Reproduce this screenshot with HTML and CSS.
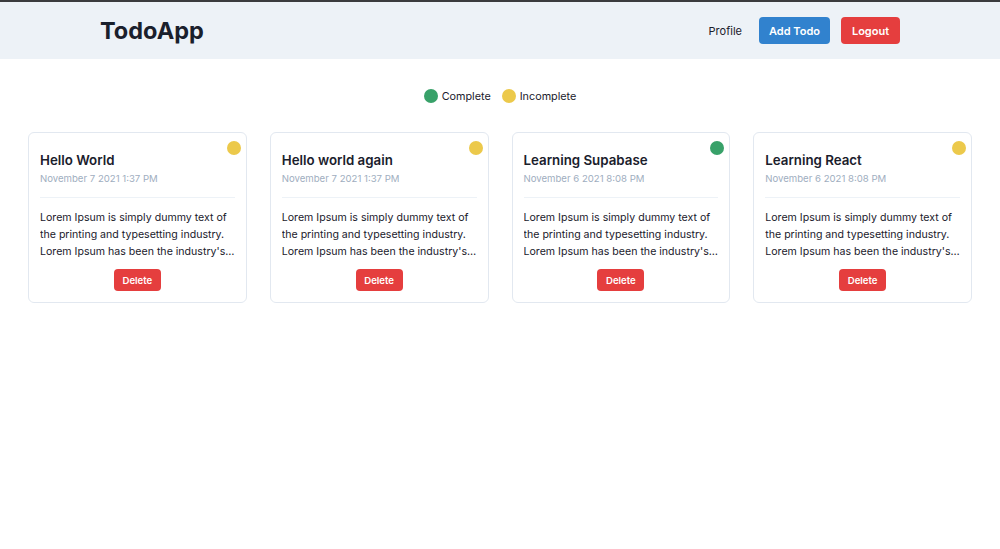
FILE: index.html
```html
<!DOCTYPE html>
<html>
<head>
<meta charset="utf-8">
<link rel="stylesheet" href="styles.css">
</head>
<body>
<header class="topbar">
  <div class="topbar-inner">
    <div class="logo">TodoApp</div>
    <nav class="nav">
      <span class="nav-link">Profile</span>
      <button class="btn btn-blue">Add Todo</button>
      <button class="btn btn-red">Logout</button>
    </nav>
  </div>
</header>
<main class="main">
  <div class="legend">
    <span class="legend-item"><span class="dot dot-green"></span>Complete</span>
    <span class="legend-item"><span class="dot dot-yellow"></span>Incomplete</span>
  </div>
  <div class="grid">
    <div class="card">
      <span class="dot dot-yellow status"></span>
      <h2 class="card-title">Hello World</h2>
      <div class="card-date">November 7 2021 1:37 PM</div>
      <hr class="divider">
      <p class="card-text">Lorem Ipsum is simply dummy text of the printing and typesetting industry. Lorem Ipsum has been the industry's standard dummy text ever since the 1500s.</p>
      <div class="card-actions"><button class="btn-sm">Delete</button></div>
    </div>
    <div class="card">
      <span class="dot dot-yellow status"></span>
      <h2 class="card-title">Hello world again</h2>
      <div class="card-date">November 7 2021 1:37 PM</div>
      <hr class="divider">
      <p class="card-text">Lorem Ipsum is simply dummy text of the printing and typesetting industry. Lorem Ipsum has been the industry's standard dummy text ever since the 1500s.</p>
      <div class="card-actions"><button class="btn-sm">Delete</button></div>
    </div>
    <div class="card">
      <span class="dot dot-green status"></span>
      <h2 class="card-title">Learning Supabase</h2>
      <div class="card-date">November 6 2021 8:08 PM</div>
      <hr class="divider">
      <p class="card-text">Lorem Ipsum is simply dummy text of the printing and typesetting industry. Lorem Ipsum has been the industry's standard dummy text ever since the 1500s.</p>
      <div class="card-actions"><button class="btn-sm">Delete</button></div>
    </div>
    <div class="card">
      <span class="dot dot-yellow status"></span>
      <h2 class="card-title">Learning React</h2>
      <div class="card-date">November 6 2021 8:08 PM</div>
      <hr class="divider">
      <p class="card-text">Lorem Ipsum is simply dummy text of the printing and typesetting industry. Lorem Ipsum has been the industry's standard dummy text ever since the 1500s.</p>
      <div class="card-actions"><button class="btn-sm">Delete</button></div>
    </div>
  </div>
</main>
</body>
</html>
```
FILE: styles.css
```css
* { box-sizing: border-box; }
html, body { margin: 0; padding: 0; background: #fff; }
body {
  font-family: Inter, "Noto Sans", "Liberation Sans", sans-serif;
  color: #1A202C;
  border-top: 2px solid #3b3c3e;
}
.topbar {
  background: #EDF2F7;
  height: 57px;
}
.topbar-inner {
  width: 800px;
  margin: 0 auto;
  height: 100%;
  display: flex;
  align-items: center;
  justify-content: space-between;
}
.logo {
  font-size: 23.5px;
  font-weight: 700;
  color: #1A202C;
}
.nav {
  display: flex;
  align-items: center;
  gap: 11px;
}
.nav-link {
  font-size: 11px;
  color: #1A202C;
  margin-right: 6px;
}
.btn {
  border: none;
  border-radius: 4px;
  height: 27px;
  padding: 0;
  color: #fff;
  font-family: inherit;
  font-size: 11px;
  font-weight: 600;
  white-space: nowrap;
}
.btn-blue { background: #3182CE; width: 71px; }
.btn-red { background: #E53E3E; width: 59px; }
.main { padding: 0 28px; }
.legend {
  display: flex;
  justify-content: center;
  gap: 11px;
  margin-top: 30px;
  font-size: 10.8px;
  color: #1A202C;
}
.legend-item { display: flex; align-items: center; gap: 4px; }
.dot {
  display: inline-block;
  width: 14px;
  height: 14px;
  border-radius: 50%;
}
.dot-green { background: #38A169; }
.dot-yellow { background: #ECC94B; }
.grid {
  display: grid;
  grid-template-columns: repeat(4, 1fr);
  gap: 23px;
  margin-top: 29px;
}
.card {
  position: relative;
  border: 1px solid #E2E8F0;
  border-radius: 6px;
  padding: 17px 11px 11px;
}
.status {
  position: absolute;
  top: 8px;
  right: 5px;
}
.card-title {
  margin: 0;
  font-size: 13.3px;
  font-weight: 600;
  line-height: 20px;
  color: #1A202C;
}
.card-date {
  font-size: 9.6px;
  line-height: 16px;
  color: #A0AEC0;
  margin-top: 1px;
}
.divider {
  border: none;
  border-top: 1px solid #EDF2F7;
  margin: 10px 0 11px;
}
.card-text {
  margin: 0;
  font-size: 10.6px;
  line-height: 17px;
  color: #1A202C;
  display: -webkit-box;
  -webkit-line-clamp: 3;
  -webkit-box-orient: vertical;
  overflow: hidden;
}
.card-actions {
  display: flex;
  justify-content: center;
  margin-top: 9px;
}
.btn-sm {
  border: none;
  border-radius: 4px;
  background: #E53E3E;
  color: #fff;
  height: 22px;
  width: 47px;
  padding: 0;
  font-family: inherit;
  font-size: 9.6px;
  font-weight: 600;
}
```
